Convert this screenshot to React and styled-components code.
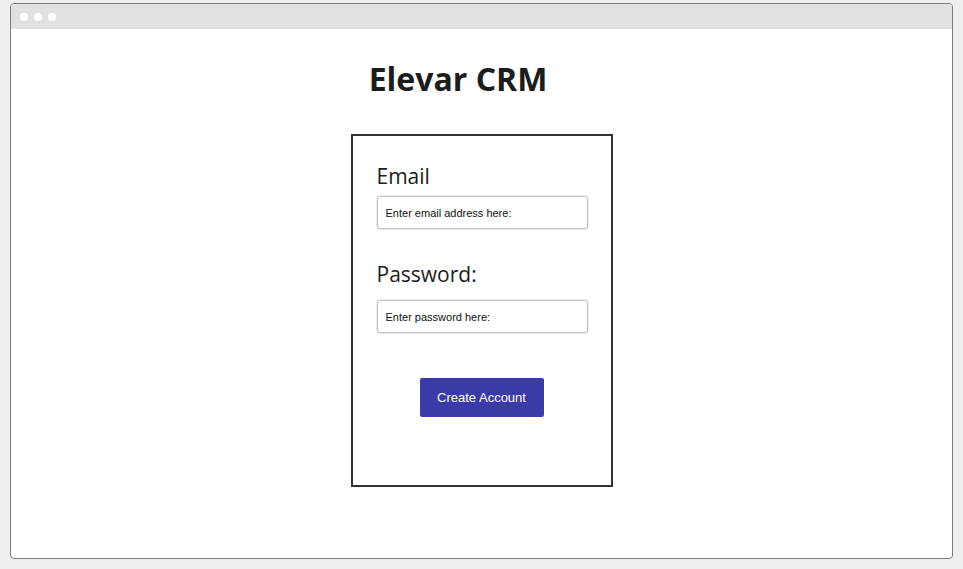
import React from "react"
import styled, { createGlobalStyle } from "styled-components"

const GlobalStyle = createGlobalStyle`
  html, body {
    margin: 0;
    padding: 0;
    background: #efefef;
  }
`

const Page = styled.div`
  padding: 3px 10px 10px 10px;
  height: 569px;
  box-sizing: border-box;
`

const Window = styled.div`
  height: 556px;
  box-sizing: border-box;
  background: #fff;
  border: 1px solid #7a7a7a;
  border-radius: 4px;
  overflow: hidden;
  display: flex;
  flex-direction: column;
`

const TitleBar = styled.div`
  height: 25px;
  background: #e1e1e1;
  display: flex;
  align-items: center;
  gap: 6px;
  padding-left: 9px;
  flex-shrink: 0;
`

const Dot = styled.span`
  width: 8px;
  height: 8px;
  border-radius: 50%;
  background: #fff;
`

const Content = styled.main`
  display: flex;
  flex-direction: column;
  align-items: center;
`

const Title = styled.h1`
  font-family: "Open Sans", sans-serif;
  font-weight: 700;
  font-size: 32px;
  line-height: 44px;
  color: #1c1c1c;
  margin: 28px 47px 0 0;
`

const Card = styled.form`
  width: 262px;
  height: 353px;
  box-sizing: border-box;
  margin-top: 33px;
  border: 2px solid #333;
  padding: 26px 24px 0 24px;
  display: flex;
  flex-direction: column;
`

const Label = styled.label`
  font-family: "Open Sans", sans-serif;
  font-size: 21px;
  line-height: 28px;
  color: #1c1c1c;
  margin-top: ${(p) => (p.$first ? "0" : "31px")};
`

const Input = styled.input`
  width: 211px;
  height: 33px;
  box-sizing: border-box;
  margin-top: ${(p) => p.$gap || "6px"};
  border: 1px solid #c4c4c4;
  box-shadow: 0 0 0 0.5px #d8d8d8;
  border-radius: 3px;
  padding: 0 8px;
  font-family: "Liberation Sans", Arial, sans-serif;
  font-size: 11px;
  color: #111;
  outline: none;

  &::placeholder {
    color: #111;
    opacity: 1;
  }
`

const Button = styled.button`
  align-self: center;
  margin-top: 45px;
  width: 124px;
  height: 39px;
  border: none;
  border-radius: 2px;
  background: #3a3aa8;
  color: #fff;
  font-family: "Liberation Sans", Arial, sans-serif;
  font-size: 13px;
  cursor: pointer;
`

function App() {
  return (
    <>
      <GlobalStyle />
      <Page>
        <Window>
          <TitleBar>
            <Dot />
            <Dot />
            <Dot />
          </TitleBar>
          <Content>
            <Title>Elevar CRM</Title>
            <Card onSubmit={(e) => e.preventDefault()}>
              <Label $first htmlFor="email">
                Email
              </Label>
              <Input id="email" type="email" placeholder="Enter email address here:" />
              <Label htmlFor="password">Password:</Label>
              <Input
                id="password"
                type="password"
                placeholder="Enter password here:"
                $gap="12px"
              />
              <Button type="submit">Create Account</Button>
            </Card>
          </Content>
        </Window>
      </Page>
    </>
  )
}

export default App
